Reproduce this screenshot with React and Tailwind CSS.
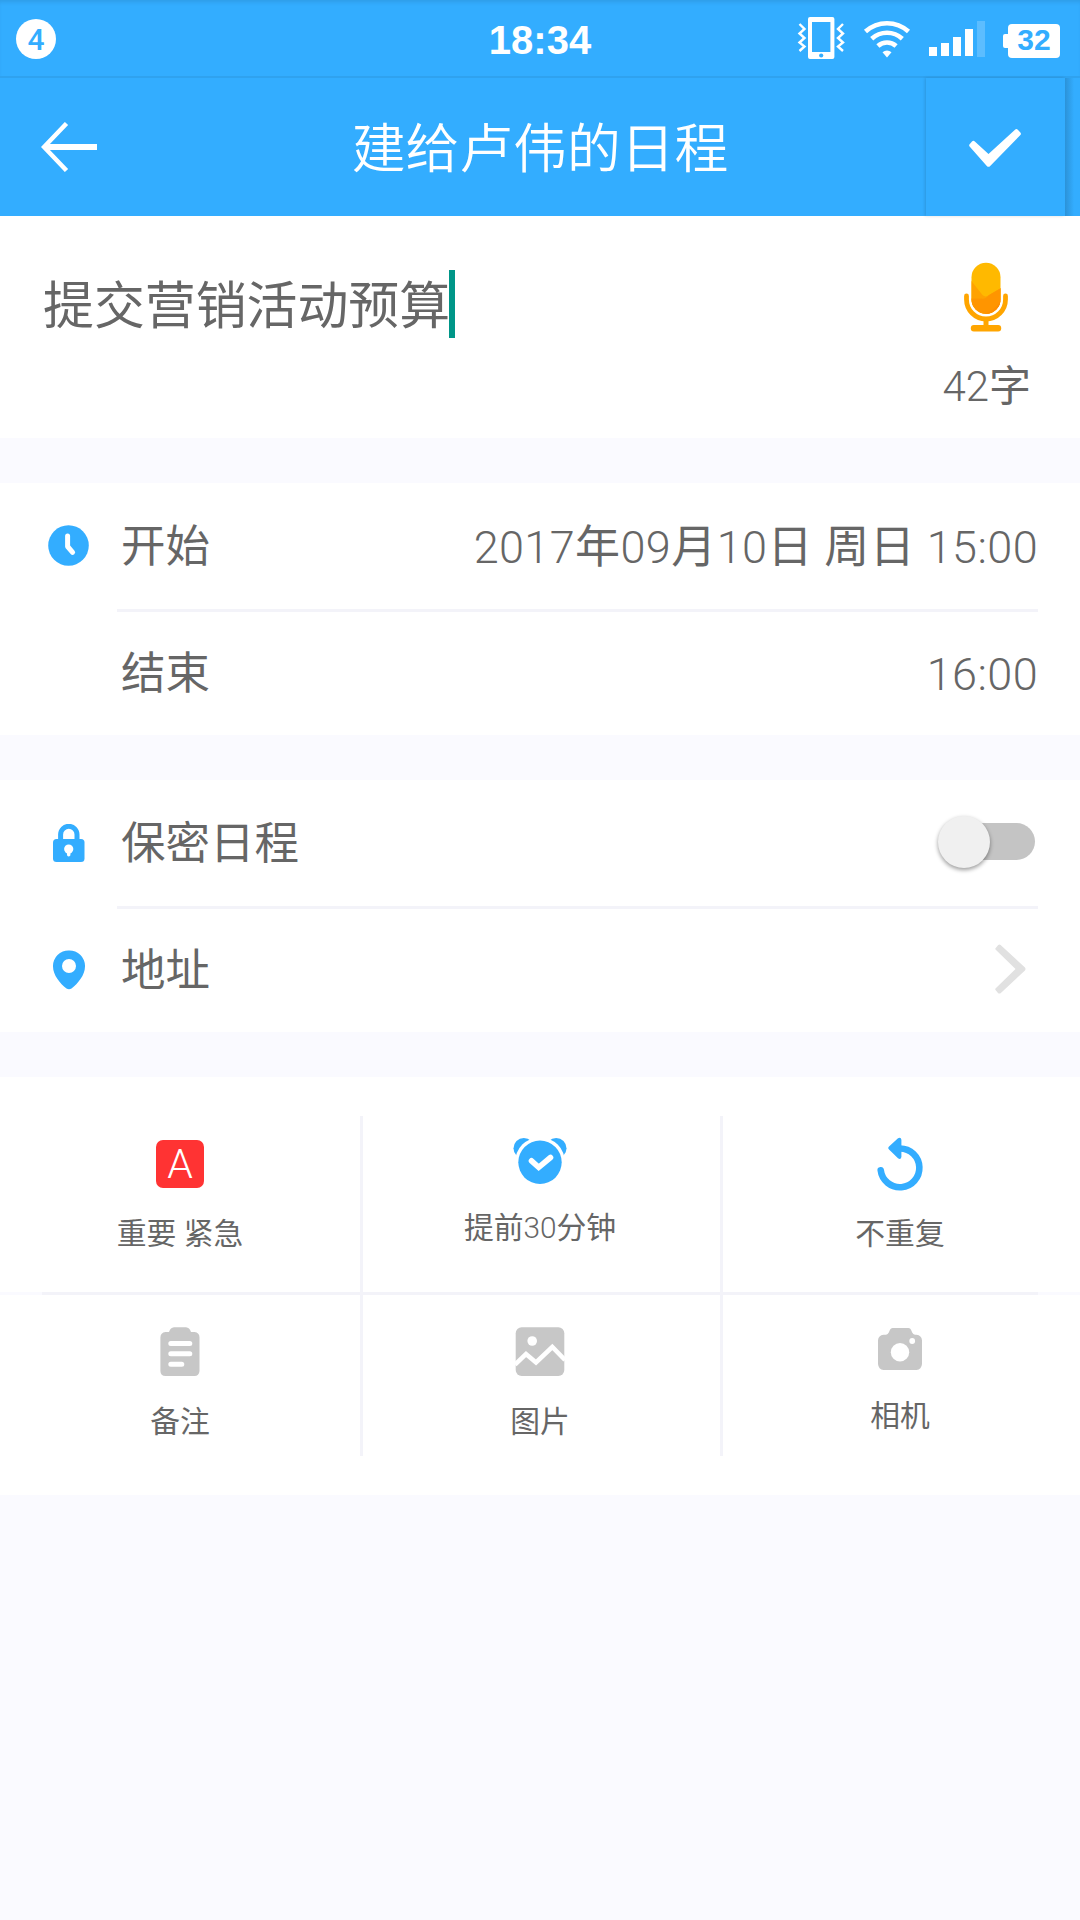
import React, { useState } from 'react';

function VibrateIcon() {
  return (
    <svg className="w-[48px] h-[44px]" viewBox="0 0 48 44" fill="none">
      <path d="M11 3a2 2 0 0 1 2-2h22.400a2 2 0 0 1 2 2v38a2 2 0 0 1-2 2H13a2 2 0 0 1-2-2zM15 6v30h18.400V6z" fill="#fff" fillRule="evenodd" />
      <circle cx="24.200" cy="39.500" r="2.100" fill="#33adff" />
      <path d="M2.500 8l5 5-5 4.500 5 4.500-5 4.500 5 4-5 4.500" stroke="#fff" strokeWidth="2.400" />
      <path d="M46 8l-5 5 5 4.500-5 4.500 5 4.500-5 4 5 4.500" stroke="#fff" strokeWidth="2.400" />
    </svg>
  );
}

function WifiIcon() {
  return (
    <svg className="w-[48px] h-[38px]" viewBox="0 0 48 38" fill="none" stroke="#fff" strokeWidth="4.600">
      <path d="M2.500 11.500a32 32 0 0 1 43 0" />
      <path d="M8.700 18.800a22.500 22.500 0 0 1 30.600 0" />
      <path d="M14.900 26a13.500 13.500 0 0 1 18.200 0" />
      <path d="M24 37.500l-4.500-5.300a7 7 0 0 1 9 0z" fill="#fff" stroke="none" />
    </svg>
  );
}

function SignalBars() {
  return (
    <div className="flex items-end gap-1 h-[36px] pb-px">
      <span className="w-2 h-[9px] bg-white" />
      <span className="w-2 h-[13px] bg-white" />
      <span className="w-2 h-[19px] bg-white" />
      <span className="w-2 h-[27px] bg-white" />
      <span className="w-2 h-[36px] -mb-px bg-[#5cbdff]" />
    </div>
  );
}

function BackIcon() {
  return (
    <svg className="w-[56px] h-[50px]" viewBox="0 0 56 50" fill="none" stroke="#fff">
      <path d="M25.500 1.500L3 25l22.500 23.500" strokeWidth="4.500" />
      <path d="M3 25h53" strokeWidth="6" />
    </svg>
  );
}

function CheckIcon() {
  return (
    <svg className="w-[52px] h-[38px]" viewBox="0 0 52 38" fill="#fff">
      <path d="M.6 17.600a2 2 0 0 1 0-2.400l2.400-2.700a2 2 0 0 1 2.800 0L19.500 25 46 .7a2 2 0 0 1 2.800 0l2.600 2.700a2 2 0 0 1 0 2.600L21.200 37a2.400 2.400 0 0 1-3.400 0z" />
    </svg>
  );
}

function MicIcon() {
  return (
    <svg className="w-[44px] h-[70px]" viewBox="0 0 44 70">
      <defs>
        <clipPath id="mic-body">
          <rect x="7.500" y="0.700" width="29" height="51" rx="14.500" />
        </clipPath>
      </defs>
      <g clipPath="url(#mic-body)">
        <rect x="7" y="0" width="30" height="52" fill="#ffb900" />
        <path d="M7 18.500l11.500 14.500q3 2.800 6.500 0L37 26v27H7z" fill="#ffa200" />
        <path d="M7 36.500h10.500q4 1 7.500-3.500L37 26v27H7z" fill="#ff9500" />
        <path d="M20 52q11-3 17-14v14z" fill="#ff8c00" />
      </g>
      <path d="M2.500 34v3.500a19.300 19.300 0 0 0 39 0V34" fill="none" stroke="#ffa500" strokeWidth="4.800" strokeLinecap="round" />
      <path d="M22 56v9" stroke="#ffa500" strokeWidth="5" />
      <rect x="6.800" y="63" width="30.400" height="6.500" rx="3" fill="#ffa500" />
    </svg>
  );
}

function ClockIcon() {
  return (
    <svg className="w-[41px] h-[41px]" viewBox="0 0 41 41">
      <circle cx="20.500" cy="20.500" r="20.300" fill="#33adff" />
      <path d="M19.600 11v10.500l5 5.800" fill="none" stroke="#fff" strokeWidth="5" strokeLinecap="round" strokeLinejoin="round" />
    </svg>
  );
}

function LockIcon() {
  return (
    <svg className="w-[32px] h-[38px] mt-[2px]" viewBox="0 0 32 38">
      <path d="M7.600 18v-7.500a8.200 8.200 0 0 1 16.400 0V18" fill="none" stroke="#33adff" strokeWidth="5" />
      <rect x="0" y="15" width="31.500" height="23" rx="3.500" fill="#33adff" />
      <circle cx="15.700" cy="25" r="4.600" fill="#fff" />
      <path d="M13.600 27h4.200l-.5 4.600q-1.600 1.800-3.200 0z" fill="#fff" />
    </svg>
  );
}

function PinIcon() {
  return (
    <svg className="w-[32px] h-[40px] mt-[2px]" viewBox="0 0 32 40" fill="#33adff" fillRule="evenodd">
      <path d="M16 .5A15.500 15.500 0 0 0 0 16.500C0 25 7 33.500 13.500 38.600q2.500 1.400 5 0C25 33.500 32 25 32 16.500A15.500 15.500 0 0 0 16 .5zM16 9a7 7 0 1 1 0 14 7 7 0 0 1 0-14z" />
    </svg>
  );
}

function ChevronIcon() {
  return (
    <svg className="w-[32px] h-[50px]" viewBox="0 0 32 50" fill="#e1e1e1">
      <path d="M.5 4.200L3.200.9q1.300-.9 2.400 0L30 23.600q1 1.400 0 2.800L5.600 49.200q-1.200.8-2.400 0L.5 46q-.5-.8 0-1.500L20.500 25 .5 5.500q-.4-.7 0-1.300z" />
    </svg>
  );
}

function PriorityIcon() {
  return (
    <div className="h-[56px] py-1">
      <div className="w-[48px] h-[48px] rounded-[7px] bg-[#ff3333] text-white flex items-center justify-center text-[41px] leading-none font-light">
        A
      </div>
    </div>
  );
}

function AlarmIcon() {
  return (
    <svg className="w-[54px] h-[50px]" viewBox="0 0 54 50">
      <circle cx="10.800" cy="12.300" r="10.300" fill="#33adff" />
      <circle cx="43.200" cy="12.300" r="10.300" fill="#33adff" />
      <circle cx="27" cy="26.300" r="25" fill="#fff" />
      <circle cx="27" cy="26.300" r="21.700" fill="#33adff" />
      <path d="M18.500 24.800l7.200 6.500L37.500 21.500" fill="none" stroke="#fff" strokeWidth="5.600" strokeLinecap="round" strokeLinejoin="miter" />
    </svg>
  );
}

function RepeatIcon() {
  return (
    <svg className="w-[48px] h-[56px]" viewBox="0 0 48 56" fill="none">
      <path d="M24 12.500a19.400 19.400 0 1 1-19.300 21.700" stroke="#33adff" strokeWidth="6.600" strokeLinecap="round" />
      <path d="M13 10.600L22 2.200q3-1.300 3.400 1.500V21q-.6 3-3.400 1.300L13 13.600q-1.800-1.500 0-3z" fill="#33adff" />
    </svg>
  );
}

function NoteIcon() {
  return (
    <svg className="w-[40px] h-[55px]" viewBox="0 0 40 55">
      <path d="M5.500 7H9q1.500-4.500 5-4.800h12q3.500.3 5 4.800h3.500q5 .5 5 5.500V46q-.5 5-5 5h-29q-5 0-5.100-5V12.500q.1-5 5.100-5.500z" fill="#c7c7c7" />
      <path d="M10.800 18.500h19M10.800 28.700h19M10.800 39.200h11" stroke="#fff" strokeWidth="5" strokeLinecap="round" />
    </svg>
  );
}

function ImageIcon() {
  return (
    <svg className="w-[50px] h-[55px]" viewBox="0 0 50 55">
      <rect x="0.700" y="2.300" width="48.600" height="48.700" rx="6" fill="#c7c7c7" />
      <circle cx="17.200" cy="16" r="4.800" fill="#fff" />
      <path d="M0 39.500L11 29l10 8.500L37.300 22 50 35" fill="none" stroke="#fff" strokeWidth="4.500" />
    </svg>
  );
}

function CameraIcon() {
  return (
    <svg className="w-[46px] h-[49px]" viewBox="0 0 46 49">
      <path d="M6.500 9.800h2.500q2-.3 2.800-2.300l1.200-2.700Q13.800 3 15.500 3h16q1.800 0 2.500 1.800l1.200 2.700q.8 2 2.800 2.300h1.500q5 .5 5.500 5.500V39q-.5 5.500-5.500 6h-33q-5-.5-5.500-6V15.300q.5-5 5.500-5.500z" fill="#c7c7c7" />
      <circle cx="23" cy="27.300" r="9.200" fill="#fff" />
      <circle cx="35.200" cy="16" r="2.900" fill="#fff" />
    </svg>
  );
}

// Digits are set in the light weight, Chinese characters in regular
function MixedText({ children }) {
  return children.split(/([\d:]+)/).map((part, i) => (
    <span key={i} className={i % 2 ? 'font-[330]' : ''}>{part}</span>
  ));
}

function Row({ icon, label, children }) {
  return (
    <div className="flex h-[123px]">
      <div className="w-[117px] pl-[48px] pb-[3px] flex items-center">
        <div className="w-[41px] flex justify-center">{icon}</div>
      </div>
      <div className="flex-1 flex items-center justify-between pl-[4px]">
        <span className="text-[44.5px] pt-[2px]">{label}</span>
        {children}
      </div>
    </div>
  );
}

function Divider() {
  return <div className="h-[3px] ml-[117px] bg-[#f3f3f9]" />;
}

function Tool({ icon, label }) {
  return (
    <div className="flex-1 flex flex-col items-center">
      {icon}
      <span className="mt-[27px] text-[29.8px] leading-[30px]"><MixedText>{label}</MixedText></span>
    </div>
  );
}

const topTools = [
  { label: '重要 紧急', icon: <PriorityIcon /> },
  { label: '提前30分钟', icon: <AlarmIcon /> },
  { label: '不重复', icon: <RepeatIcon /> },
];

const bottomTools = [
  { label: '备注', icon: <NoteIcon /> },
  { label: '图片', icon: <ImageIcon /> },
  { label: '相机', icon: <CameraIcon /> },
];

export default function App() {
  const [secret, setSecret] = useState(false);

  return (
    <div className="w-[1080px] h-[1920px] overflow-hidden bg-[#fafaff] text-[#666666] font-[Roboto,'Noto_Sans_CJK_SC',sans-serif]">
      {/* Status bar */}
      <div className="h-[78px] bg-[#33adff] border-b-2 border-[#2fa2ef] shadow-[inset_0_4px_4px_-2px_rgba(0,0,0,0.1)] grid grid-cols-3 items-start font-['Liberation_Sans',sans-serif]">
        <div className="w-[40px] h-[40px] mt-[19px] ml-[16px] pt-px rounded-full bg-white text-[#33adff] text-[30px] leading-none font-[Roboto,sans-serif] font-medium flex items-center justify-center">
          4
        </div>
        <div className="mt-[20px] text-center text-white text-[40px] leading-[40px] font-bold">18:34</div>
        <div className="flex justify-end pr-[20px]">
          <div className="mt-[16px]"><VibrateIcon /></div>
          <div className="mt-[20px] ml-[18px]"><WifiIcon /></div>
          <div className="mt-[21px] ml-[18px]"><SignalBars /></div>
          <div className="mt-[22px] ml-[18px] flex items-center">
            <span className="w-[5px] h-[14px] rounded-l-[2px] bg-white" />
            <span className="w-[52px] h-[34px] rounded-[4px] bg-white text-[#33adff] text-[30px] leading-[32px] font-bold text-center">32</span>
          </div>
        </div>
      </div>

      {/* Title bar */}
      <div className="h-[138px] bg-[#33adff] text-white flex items-stretch">
        <button className="w-[154px] pl-[41px] flex items-center"><BackIcon /></button>
        <h1 className="flex-1 flex items-center justify-center pt-[6px] text-[53.8px] leading-[54px] font-[350]">建给卢伟的日程</h1>
        <button className="w-[139px] flex items-center pt-px pr-[2px] justify-center shadow-[-1px_0_3px_rgba(0,0,0,0.14)]">
          <CheckIcon />
        </button>
        <div className="w-[15px] bg-linear-to-r from-[#2b92d8] to-[#33adff] to-60%" />
      </div>

      {/* Content */}
      <div className="h-[222px] bg-white flex justify-between pl-[43px] pr-[49px]">
        <div className="flex h-[68px] mt-[54px] items-center">
          <span className="pt-[6px] text-[50.9px] leading-[68px] w-[406px] whitespace-nowrap">提交营销活动预算</span>
          <span className="w-[6px] h-[68px] bg-[#009688]" />
        </div>
        <div className="pt-[46px] flex flex-col items-center">
          <MicIcon />
          <span className="mt-[34px] ml-[1px] text-[42px] leading-[42px]"><MixedText>42字</MixedText></span>
        </div>
      </div>

      {/* Time */}
      <div className="mt-[45px] h-[252px] bg-white pr-[42px] pt-[2px] text-[45px] leading-[45px]">
        <Row icon={<ClockIcon />} label="开始">
          <span className="pt-[2px] tracking-[0.4px]"><MixedText>2017年09月10日 周日 15:00</MixedText></span>
        </Row>
        <div className="h-px" />
        <Divider />
        <Row label="结束">
          <span className="pt-px tracking-[0.4px]"><MixedText>16:00</MixedText></span>
        </Row>
      </div>

      {/* Options */}
      <div className="mt-[45px] h-[252px] bg-white pr-[42px] pt-[2px] text-[45px] leading-[45px]">
        <Row icon={<LockIcon />} label="保密日程">
          <button
            onClick={() => setSecret(!secret)}
            className={`w-[92px] h-[37px] mr-[3px] -mt-[4px] rounded-full flex items-center ${secret ? 'justify-end bg-[#99d6ff]' : 'bg-[#c4c4c4]'}`}
          >
            <span className="w-[52px] h-[52px] -ml-[5px] rounded-full bg-[#f0f0f0] shadow-[0_2px_4px_rgba(0,0,0,0.4)]" />
          </button>
        </Row>
        <div className="h-px" />
        <Divider />
        <Row icon={<PinIcon />} label="地址">
          <span className="mr-[11px] -mt-[3px]"><ChevronIcon /></span>
        </Row>
      </div>

      {/* Tools */}
      <div className="mt-[45px] h-[418px] bg-white pt-[39px]">
        <div className="h-[176px] flex">
          {topTools.map((tool) => (
            <div key={tool.label} className="w-[360px] pt-5 flex border-[#f3f3f9] not-first:border-l-[3px] not-first:pr-[3px]">
              <Tool {...tool} />
            </div>
          ))}
        </div>
        <div className="h-[3px] bg-[#fafaff] px-[42px]">
          <div className="h-full bg-[#f3f3f9]" />
        </div>
        <div className="h-[161px] flex">
          {bottomTools.map((tool) => (
            <div key={tool.label} className="w-[360px] pt-[30px] flex border-[#f3f3f9] not-first:border-l-[3px] not-first:pr-[3px]">
              <Tool {...tool} />
            </div>
          ))}
        </div>
      </div>
    </div>
  );
}
